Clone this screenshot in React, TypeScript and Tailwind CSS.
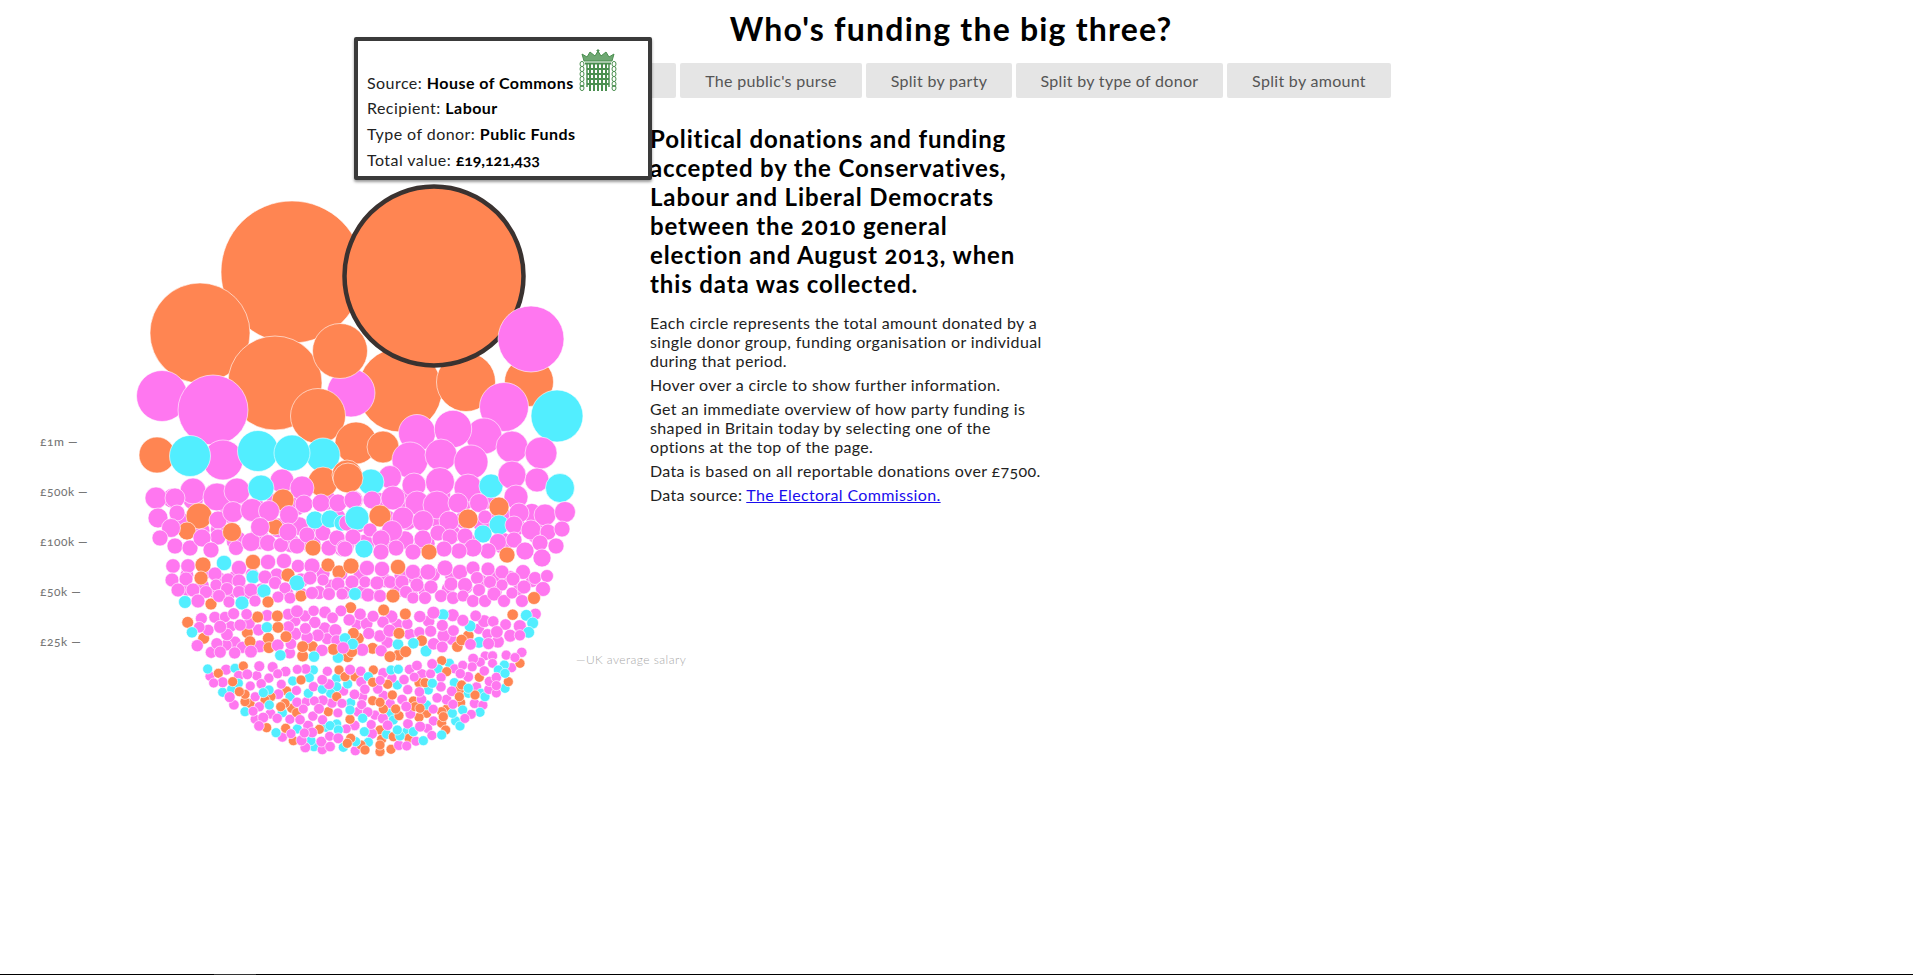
import React from 'react';

const ORANGE = '#ff8552';
const PINK = '#ff77f0';
const CYAN = '#52eeff';

type Dot = [number, number, number, string];

const o = ORANGE;
const p = PINK;
const c = CYAN;

// circles large enough to read off the picture, in paint order
const before: Dot[] = [
  [292, 272, 71, o],
  [400, 390, 42, o],
  [200, 333, 50, o],
  [275, 383, 47, o],
  [351, 393, 24, p],
  [340, 351, 27.5, o],
  [466, 382, 29.5, o],
  [529, 382, 24.5, o],
];

const after: Dot[] = [
  [531, 339, 33, p],
  [162, 396, 25.5, p],
  [213, 410, 35, p],
  [318, 416, 27.5, o],
  [504, 407, 24.5, p],
  [557, 416, 26, c],
  [356, 443, 21, o],
  [417, 433, 18.5, p],
  [484, 436, 18, p],
  [453, 429, 18.7, p],
  [383, 447, 16, o],
  [410, 460, 18, p],
  [441, 455, 16, p],
  [471, 462, 17, p],
  [512, 447, 16, p],
  [541, 453, 16, p],
  [157, 455, 18, o],
  [223, 460, 20, p],
  [190, 456, 20.5, c],
  [258, 451, 20.5, c],
  [323, 455, 17, c],
  [292, 453, 18, c],
  [323, 482, 15, o],
  [347, 475, 15, o],
  [193, 491, 13, p],
  [217, 497, 14, p],
  [237, 491, 13, p],
  [282, 481, 12, p],
  [302, 488, 12, p],
  [390, 477, 11.5, p],
  [414, 485, 12, p],
  [440, 482, 14.5, p],
  [468, 488, 14, p],
  [491, 486, 12, c],
  [512, 475, 14, p],
  [537, 480, 12, p],
  [371, 482, 13, c],
  [348, 478, 15, o],
  [560, 488, 14.5, c],
  [261, 488, 13, c],
  [283, 500, 11, o],
  [156, 498, 11, p],
  [175, 498, 10, p],
  [158, 518, 10, p],
  [177, 513, 8, p],
  [199, 516, 13, o],
  [187, 531, 9, o],
  [218, 520, 9, p],
  [218, 537, 8, p],
  [171, 528, 9.5, p],
  [160, 538, 8, p],
  [175, 546, 8, p],
  [190, 548, 8, p],
  [202, 538, 9, p],
  [211, 550, 8, p],
  [236, 548, 7.5, p],
  [251, 542, 9.5, p],
  [268, 543, 8.5, p],
  [281, 545, 7.5, p],
  [233, 512, 10.5, p],
  [252, 510, 11.5, p],
  [275, 527, 8, o],
  [269, 511, 10.5, p],
  [260, 527, 9.5, p],
  [232, 532, 9.5, o],
  [304, 504, 9, p],
  [289, 515, 9.5, p],
  [288, 532, 9, p],
  [297, 546, 8, p],
  [307, 535, 8, p],
  [313, 548, 8, o],
  [323, 533, 8, p],
  [329, 548, 8, p],
  [337, 538, 8, p],
  [344, 548, 8, p],
  [315, 520, 9, c],
  [330, 519, 9, c],
  [342, 523, 8, c],
  [321, 503, 9, p],
  [338, 503, 9, p],
  [353, 500, 9, p],
  [372, 500, 9, p],
  [393, 498, 12, p],
  [417, 503, 12, p],
  [437, 505, 14, p],
  [458, 503, 10, p],
  [479, 503, 9.5, p],
  [516, 497, 12, p],
  [347, 523, 8, p],
  [357, 518, 12, c],
  [380, 516, 11, o],
  [403, 518, 11, p],
  [423, 521, 10.5, p],
  [449, 521, 10, p],
  [468, 519, 10, o],
  [485, 517, 7, p],
  [499, 507, 10, o],
  [499, 525, 10, c],
  [519, 513, 10, p],
  [545, 515, 11, p],
  [565, 512, 10.5, p],
  [514, 525, 9, p],
  [531, 530, 10, p],
  [548, 532, 8, p],
  [562, 529, 8, p],
  [483, 534, 9, c],
  [370, 530, 7, p],
  [392, 531, 10.5, p],
  [381, 539, 9, p],
  [353, 537, 8, p],
  [423, 539, 9, p],
  [438, 533, 8, p],
  [450, 537, 8, p],
  [465, 536, 8, p],
  [498, 542, 8.5, p],
  [514, 540, 8, p],
  [540, 543, 8, p],
  [556, 546, 8, p],
  [525, 551, 9, p],
  [542, 558, 9, p],
  [507, 555, 8, o],
  [488, 551, 8, p],
  [473, 548, 9, p],
  [459, 551, 8, p],
  [444, 549, 8, p],
  [429, 552, 8, o],
  [413, 552, 8, p],
  [396, 548, 8, p],
  [381, 552, 8, p],
  [364, 549, 9, c],
  [345, 549, 8, p],
  // 25k-50k row
  [173, 566, 7.3, p],
  [188, 566, 7.3, p],
  [203, 565, 8, o],
  [224, 563, 7.7, c],
  [239, 568, 7.7, p],
  [253, 562, 7.7, o],
  [268, 562, 7.7, p],
  [284, 561, 7.7, p],
  [298, 566, 6.7, p],
  [312, 566, 8, p],
  [328, 565, 7, o],
  [339, 572, 7, o],
  [351, 566, 8, o],
  [367, 568, 7.7, p],
  [382, 569, 7.7, p],
  [398, 567, 7.7, o],
  [413, 572, 7.7, p],
  [428, 572, 8, p],
  [445, 568, 8, p],
  [460, 572, 7.7, p],
  [473, 568, 7, p],
  [488, 569, 7, p],
  [502, 572, 7, p],
  [523, 572, 7.5, p],
  [513, 579, 7, p],
  [535, 578, 6.5, p],
  [547, 576, 6.5, p],
  [172, 580, 7, p],
  [186, 579, 7, p],
  [215, 574, 7, p],
  [201, 578, 7, o],
  [228, 580, 7, p],
  [239, 581, 7, p],
  [253, 577, 7, c],
  [265, 577, 7, p],
  [288, 575, 7, o],
  [297, 583, 8, c],
  [310, 578, 7, p],
  [323, 580, 6, p],
  [338, 584, 7, p],
  [352, 582, 7, p],
  [365, 582, 6, p],
  [377, 583, 7, p],
  [390, 582, 6.5, p],
  [402, 582, 7, p],
  [417, 585, 7, p],
  [431, 587, 7, p],
  [451, 584, 7, p],
  [465, 585, 7.5, p],
  [477, 578, 6.5, p],
  [490, 582, 6.5, p],
  [502, 585, 6, p],
  [178, 590, 7, p],
  [193, 590, 7, p],
  [206, 592, 6.5, p],
  [216, 585, 6, p],
  [227, 589, 6.5, p],
  [239, 592, 6.5, p],
  [251, 590, 7, p],
  [264, 591, 7, c],
  [275, 583, 6.5, p],
  [285, 588, 6, p],
  [278, 597, 6, p],
  [290, 598, 6, p],
  [301, 596, 6, o],
  [312, 593, 6.5, p],
  [329, 594, 6.5, p],
  [342, 594, 6, p],
  [355, 594, 6.5, c],
  [368, 595, 7, p],
  [380, 596, 6.5, p],
  [393, 596, 7, o],
  [406, 592, 6.5, p],
  [413, 598, 6, p],
  [425, 598, 6.5, p],
  [441, 596, 6.5, p],
  [453, 598, 6.5, p],
  [463, 596, 6, p],
  [473, 601, 6.5, p],
  [479, 590, 6.5, p],
  [485, 601, 6.5, p],
  [494, 594, 7, p],
  [504, 601, 6.5, p],
  [512, 593, 6, p],
  [522, 601, 6.5, p],
  [524, 587, 7, p],
  [543, 589, 7.5, p],
  [534, 598, 6.5, o],
  [185, 602, 6.5, c],
  [198, 601, 7, p],
  [211, 604, 6, o],
  [219, 596, 6.5, p],
  [229, 602, 6, p],
  [242, 603, 7, c],
  [255, 601, 6, p],
  [268, 602, 6, o],
];

// accent dots of the two small rows, as read from the crops
const rowAccents: Dot[] = [
  ...[
    [203, 457], [251, 505], [413, 441], [472, 438], [474, 472], [445, 505], [447, 533], [382, 488], [390, 515],
    [498, 500], [692, 413], [791, 420], [856, 432], [548, 530], [577, 530], [548, 558], [640, 538], [683, 560],
    [758, 535], [810, 560], [837, 490], [857, 545], [836, 555], [700, 490], [715, 505], [695, 545],
  ].map(([x, y]): Dot => [120 + x / 3, 470 + y / 3, 5.9, o]),
  ...[
    [216, 487], [441, 472], [481, 556], [582, 560], [654, 563], [675, 505], [698, 522], [834, 523], [880, 520],
  ].map(([x, y]): Dot => [120 + x / 3, 470 + y / 3, 5.7, c]),
  ...[
    [17, 433], [338, 434], [205, 497], [185, 510], [172, 530], [65, 512], [18, 545],
  ].map(([x, y]): Dot => [400 + x / 3, 470 + y / 3, 5.7, o]),
  ...[
    [129, 434], [379, 436], [398, 459], [386, 487], [237, 517], [210, 468], [40, 520], [78, 543],
  ].map(([x, y]): Dot => [400 + x / 3, 470 + y / 3, 5.9, c]),
];

const bowlAccents: Dot[] = [
  ...[
    [53, 87], [135, 85], [145, 130], [125, 148], [98, 157], [220, 158], [237, 150], [238, 195], [165, 215], [277, 218],
    [300, 170], [322, 267], [258, 278], [308, 123], [358, 113], [370, 90], [355, 160], [397, 148], [422, 160],
    [440, 115], [440, 140], [473, 132], [535, 110], [603, 90], [625, 88], [745, 87], [778, 70], [622, 135], [727, 130],
    [715, 150], [710, 195], [793, 128], [835, 145], [835, 160], [873, 160], [885, 170], [925, 90], [943, 75], [945, 100],
    [945, 145], [870, 217], [818, 210], [787, 220], [797, 243], [810, 258], [755, 285], [700, 302], [630, 288], [650, 275],
    [670, 275], [622, 270], [610, 240], [603, 220], [590, 283], [535, 307], [523, 275], [518, 235], [482, 188], [480, 210],
    [440, 252], [420, 257], [408, 262], [445, 270], [363, 302], [372, 320], [460, 322], [497, 305],
  ].map(([x, y]): Dot => [190 + x / 3, 640 + y / 3, 5, c]),
  ...[
    [85, 100], [160, 78], [128, 125], [148, 155], [165, 163], [165, 185], [180, 190], [243, 170], [225, 180], [290, 153],
    [272, 200], [285, 190], [305, 205], [320, 218], [230, 263], [287, 265], [388, 268], [310, 302], [333, 120], [447, 90],
    [465, 110], [495, 110], [550, 90], [548, 127], [593, 133], [607, 165], [440, 170], [415, 215], [480, 238], [548, 182],
    [570, 187], [580, 207], [617, 207], [627, 227], [670, 183], [675, 200], [690, 205], [710, 220], [687, 232], [687, 128],
    [705, 128], [755, 62], [770, 95], [868, 112], [815, 135], [808, 150], [808, 170], [855, 165], [812, 188], [755, 215],
    [770, 207], [760, 230], [755, 250], [767, 270], [955, 125], [990, 70], [575, 298], [610, 290], [657, 295], [570, 270],
    [482, 295], [472, 310], [513, 315], [525, 330], [570, 335], [570, 315], [603, 328],
  ].map(([x, y]): Dot => [190 + x / 3, 640 + y / 3, 5, o]),
];

function rng(seed: number) {
  return () => {
    seed = (seed + 0x6d2b79f5) | 0;
    let t = Math.imul(seed ^ (seed >>> 15), 1 | seed);
    t = (t + Math.imul(t ^ (t >>> 7), 61 | t)) ^ t;
    return ((t ^ (t >>> 14)) >>> 0) / 4294967296;
  };
}

function lerp(points: number[][], x: number) {
  for (let i = 1; i < points.length; i++) {
    if (x <= points[i][0]) {
      const [x0, y0] = points[i - 1];
      const [x1, y1] = points[i];
      return y0 + ((y1 - y0) * (x - x0)) / (x1 - x0);
    }
  }
  return points[points.length - 1][1];
}

// fills the band between two outlines with pink dots around the accents
function pack(seed: number, accents: Dot[], top: number[][], bottom: number[][], rMin: number, rMax: number, tight = 0.74) {
  const rand = rng(seed);
  const placed: Dot[] = [];
  accents.forEach((a) => {
    if (!placed.some((d) => Math.hypot(d[0] - a[0], d[1] - a[1]) < 3.5)) placed.push(a);
  });
  const x0 = top[0][0];
  const x1 = top[top.length - 1][0];
  for (let i = 0; i < 20000; i++) {
    const x = x0 + rand() * (x1 - x0);
    const yt = lerp(top, x);
    const yb = lerp(bottom, x);
    if (yb <= yt) continue;
    const y = yt + rand() * (yb - yt);
    const r = rMin + rand() * (rMax - rMin);
    if (placed.every((d) => Math.hypot(d[0] - x, d[1] - y) > (d[2] + r) * tight)) placed.push([x, y, r, PINK]);
  }
  return placed
    .map((d) => [rand(), d] as [number, Dot])
    .sort((a, b) => a[0] - b[0])
    .map((e) => e[1]);
}

// pink circles that lie mostly hidden under the ones listed by hand
const underUpper = pack(
  3,
  [],
  [[172, 498], [300, 492], [420, 490], [500, 500], [545, 510]],
  [[172, 540], [300, 546], [420, 546], [500, 546], [545, 535]],
  9,
  11,
  1,
);

const underLower = pack(
  5,
  [],
  [[180, 572], [300, 572], [420, 574], [535, 578]],
  [[180, 594], [300, 596], [420, 596], [535, 590]],
  6.5,
  7.5,
  1,
);

const smallRow = pack(
  7,
  rowAccents,
  [[186, 620], [215, 614], [260, 613], [320, 609], [400, 610], [460, 613], [500, 617], [536, 613]],
  [[186, 624], [200, 652], [260, 654], [340, 654], [420, 650], [470, 646], [520, 640], [536, 620]],
  5.6,
  6.6,
);

const bowl = pack(
  11,
  bowlAccents,
  [[206, 668], [257, 665], [323, 670], [373, 668], [423, 665], [457, 660], [490, 655], [522, 652]],
  [[206, 670], [215, 687], [222, 697], [245, 717], [285, 744], [325, 751], [370, 751], [410, 746], [450, 729], [480, 710], [505, 685], [522, 658]],
  4.9,
  5.5,
);

const axis = [
  ['£1m —', 446],
  ['£500k —', 496],
  ['£100k —', 546],
  ['£50k —', 596],
  ['£25k —', 646],
] as const;

const tabs = [
  { label: 'Overview', width: 'w-[154px]' },
  { label: "The public's purse", width: 'w-[182px]' },
  { label: 'Split by party', width: 'w-[146px]' },
  { label: 'Split by type of donor', width: 'w-[207px]' },
  { label: 'Split by amount', width: 'w-[164px]' },
];

function Portcullis() {
  const bars = [10, 14, 18, 22, 26];
  const links = [15, 20, 25, 30, 35, 39];
  return (
    <svg viewBox="0 0 38 43" className="h-[43px] w-[38px] shrink-0" fill="none" stroke="#4b8f50">
      {/* crown */}
      <path d="M5 12 L33 12 L35 5 L30 8 L27 3 L22 7 L19 2 L16 7 L11 3 L8 8 L3 5 Z" fill="#6fa873" strokeWidth="1" />
      <path d="M19 0 V4 M17.5 1.5 H20.5" strokeWidth="1" />
      <path d="M6 14.5 H32" strokeWidth="2" />
      {/* grille */}
      {bars.map((x) => (
        <path key={x} d={`M${x + 1} 15 V42`} strokeWidth="2" />
      ))}
      {[20, 25, 30, 35].map((y) => (
        <path key={y} d={`M8 ${y} H30`} strokeWidth="2" />
      ))}
      <path d="M8 15 V38 M30 15 V38" strokeWidth="1.5" />
      {/* chains */}
      {links.map((y) => (
        <g key={y}>
          <ellipse cx="3" cy={y} rx="2" ry="2.6" strokeWidth="1" />
          <ellipse cx="35" cy={y} rx="2" ry="2.6" strokeWidth="1" />
        </g>
      ))}
    </svg>
  );
}

function Chart() {
  const dots = (list: Dot[], key: string) =>
    list.map(([x, y, r, fill], i) => (
      <circle key={key + i} cx={x} cy={y} r={r} fill={fill} stroke="#fff" strokeWidth={0.6} />
    ));
  return (
    <svg viewBox="0 110 650 664" className="h-[664px] w-[650px] shrink-0 overflow-visible">
      {dots(before, 'a')}
      <circle cx={434} cy={276} r={89.5} fill={ORANGE} stroke="#3a3230" strokeWidth={4.5} />
      {dots(underUpper, 'u')}
      {dots(underLower, 'v')}
      {dots(after, 'b')}
      {dots(smallRow, 'c')}
      {dots(bowl, 'd')}
      {axis.map(([label, y]) => (
        <text key={label} x={40} y={y} fontSize={12} fontWeight={500} fill="#777" className="tracking-[0.5px]">
          {label}
        </text>
      ))}
      <text x={576} y={664} fontSize={12} fontWeight={300} fill="#a8a8a8" className="tracking-[0.45px]">
        —UK average salary
      </text>
    </svg>
  );
}

export default function App() {
  return (
    <div className="relative flex h-[975px] flex-col overflow-hidden bg-white font-['Lato','Liberation_Sans',sans-serif] text-[#222] oldstyle-nums">
      <h1 className="pt-[10px] pr-[11px] text-center text-[32px] leading-[38px] font-bold tracking-[1.2px] text-black">
        Who's funding the big three?
      </h1>

      <div className="mt-[15px] flex justify-center gap-1">
        {tabs.map((tab) => (
          <button
            key={tab.label}
            className={`h-[35px] rounded-[2px] bg-[#e5e5e5] text-center text-base font-normal tracking-[0.3px] text-[#555] ${tab.width}`}
          >
            {tab.label}
          </button>
        ))}
      </div>

      <div className="mt-[12px] flex flex-1">
        <Chart />
        <div className="w-[410px] pt-[14px]">
          <h2 className="text-2xl leading-[29px] font-bold tracking-[0.87px] text-black">
            Political donations and funding
            <br />
            accepted by the Conservatives,
            <br />
            Labour and Liberal Democrats
            <br />
            between the 2010 general
            <br />
            election and August 2013, when
            <br />
            this data was collected.
          </h2>
          <div className="mt-[15px] flex flex-col gap-[5px] text-base leading-[19px] font-normal tracking-[0.36px]">
            <p>
              Each circle represents the total amount donated by a
              <br />
              single donor group, funding organisation or individual
              <br />
              during that period.
            </p>
            <p>Hover over a circle to show further information.</p>
            <p>
              Get an immediate overview of how party funding is
              <br />
              shaped in Britain today by selecting one of the
              <br />
              options at the top of the page.
            </p>
            <p>Data is based on all reportable donations over £7500.</p>
            <p>
              Data source:{' '}
              <a href="#" className="text-[#1a0dee] underline">
                The Electoral Commission.
              </a>
            </p>
          </div>
        </div>
      </div>

      <div className="flex h-px">
        <div className="w-[214px] bg-black" />
        <div className="w-[42px] bg-[#333]" />
        <div className="flex-1 bg-black" />
      </div>

      {/* tooltip for the hovered circle */}
      <div className="absolute top-[37px] left-[354px] h-[143px] w-[298px] rounded-[2px] border-4 border-[#3a3a3a] bg-white pt-[8px] pr-2 pl-[9px] text-base leading-[26px] font-normal tracking-[0.45px] text-[#222] shadow-[0_2px_3px_rgba(0,0,0,0.4)]">
        <div className="flex items-end gap-[5px]">
          <p className="mb-[-2px] leading-[23px] whitespace-nowrap">
            Source: <b className="font-bold text-black">House of Commons</b>
          </p>
          <Portcullis />
        </div>
        <p className="mt-[3px]">
          Recipient: <b className="font-bold text-black">Labour</b>
        </p>
        <p>
          Type of donor: <b className="font-bold text-black">Public Funds</b>
        </p>
        <p>
          Total value: <b className="font-bold tracking-[-0.1px] text-black">£19,121,433</b>
        </p>
      </div>
    </div>
  );
}
